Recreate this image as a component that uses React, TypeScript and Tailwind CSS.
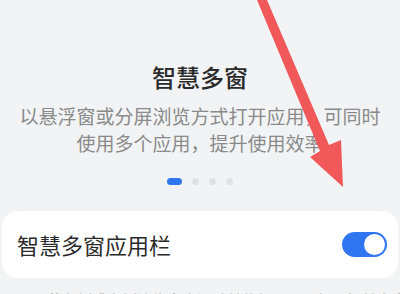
import React from 'react';

const FONT = { fontFamily: '"Noto Sans CJK SC", "Noto Sans", sans-serif' };

function Dots() {
  return (
    <div className="mt-[22px] flex items-center justify-center gap-[10px]">
      <span className="h-[7px] w-[15px] rounded-full bg-[#2f76f0]" />
      <span className="h-[7px] w-[7px] rounded-full bg-[#dfe2e6]" />
      <span className="h-[7px] w-[7px] rounded-full bg-[#dfe2e6]" />
      <span className="h-[7px] w-[7px] rounded-full bg-[#dfe2e6]" />
    </div>
  );
}

function Toggle() {
  return (
    <div className="flex h-[25px] w-[45px] items-center justify-end rounded-full bg-[#2f76f0] px-[2px]">
      <span className="h-[21px] w-[21px] rounded-full bg-white" />
    </div>
  );
}

export default function App() {
  return (
    <div className="relative h-[294px] w-[400px] overflow-hidden bg-[#f1f3f5]" style={FONT}>
      <div className="pt-[62px] text-center text-[24px] font-medium leading-[30px] text-[#2b2b2b]">智慧多窗</div>
      <div className="mt-[10px] text-center text-[19px] leading-[27px] text-[#8a8a8a]">
        以悬浮窗或分屏浏览方式打开应用，可同时
        <br />
        使用多个应用，提升使用效率
      </div>
      <Dots />
      <div className="mx-[2px] mt-[26px] flex h-[67px] items-center justify-between rounded-2xl bg-white pl-[15px] pr-[11px]">
        <span className="text-[22px] text-[#2b2b2b]">智慧多窗应用栏</span>
        <Toggle />
      </div>
      <div className="mt-[12px] whitespace-nowrap pl-[17px] text-[15px] leading-[20px] text-[#9a9a9a]">
        从屏幕左侧或右侧边缘向内滑动并停顿，即可打开智慧多窗应用栏
      </div>
      <svg className="absolute left-0 top-0" width="400" height="294" viewBox="0 0 400 294">
        <polygon
          points="257,0 267,0 329,145 341,140 343,187 310,157 320,151"
          fill="#f1585a"
        />
      </svg>
    </div>
  );
}
